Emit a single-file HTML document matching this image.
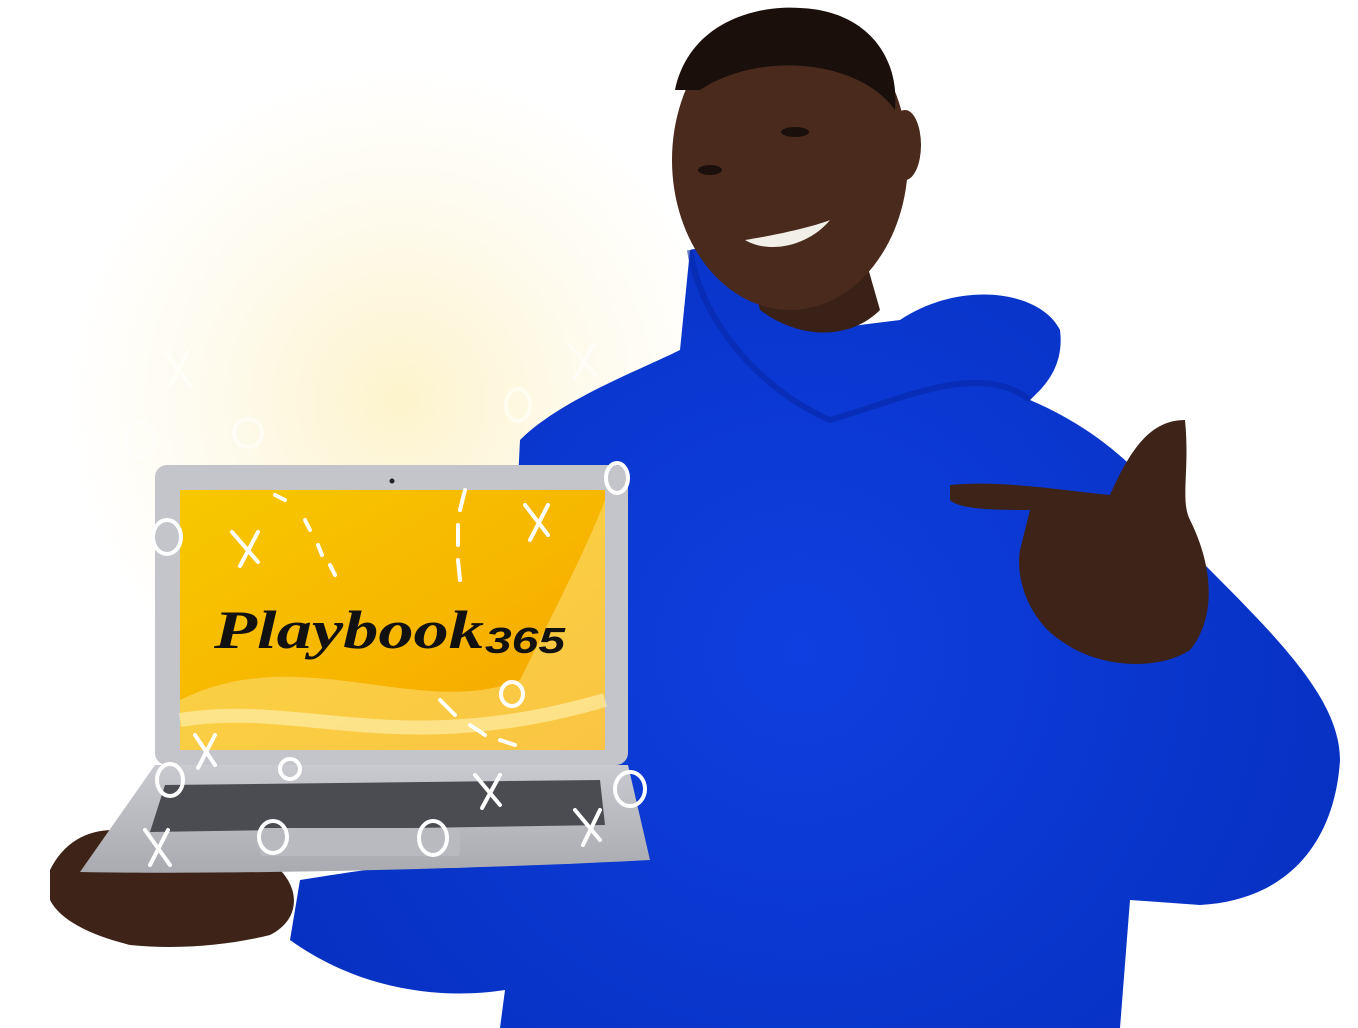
<!DOCTYPE html>
<html><head><meta charset="utf-8"><style>
html,body{margin:0;padding:0;width:1358px;height:1028px;overflow:hidden;background:#fff}
svg{display:block}
</style></head><body>
<svg width="1358" height="1028" viewBox="0 0 1358 1028" xmlns="http://www.w3.org/2000/svg">
<defs>
<radialGradient id="glow" cx="400" cy="400" r="330" gradientUnits="userSpaceOnUse">
<stop offset="0" stop-color="#fdf3cc"/><stop offset="0.5" stop-color="#fefaea"/><stop offset="1" stop-color="#fff"/>
</radialGradient>
<linearGradient id="scr" x1="0" y1="0" x2="1" y2="1">
<stop offset="0" stop-color="#f7c800"/><stop offset="0.6" stop-color="#f7b400"/><stop offset="1" stop-color="#f5a300"/>
</linearGradient>
<radialGradient id="blue" cx="800" cy="650" r="600" gradientUnits="userSpaceOnUse">
<stop offset="0" stop-color="#0f3fe0"/><stop offset="1" stop-color="#0630c0"/>
</radialGradient>
<linearGradient id="base" x1="0" y1="0" x2="0" y2="1">
<stop offset="0" stop-color="#c9cacf"/><stop offset="1" stop-color="#a9abb1"/>
</linearGradient>
</defs>
<rect width="1358" height="1028" fill="url(#glow)"/>
<!-- hoodie -->
<path d="M520 440 C560 400 640 370 680 350 L690 250 C720 240 760 300 820 330 L900 320 C960 280 1040 290 1060 330 C1065 370 1040 390 1030 400 C1100 430 1160 480 1200 560 C1280 640 1340 700 1340 760 C1335 840 1290 900 1200 905 L1130 900 L1120 1028 L500 1028 L505 990 C440 1000 360 990 290 940 L300 880 C360 870 440 860 500 850 Z" fill="url(#blue)"/>
<path d="M690 250 C700 320 760 390 830 420 C900 400 980 360 1030 400" fill="none" stroke="#0626a8" stroke-width="6" opacity="0.6"/>
<!-- neck and head -->
<path d="M740 230 L860 240 L880 310 C850 340 800 340 760 310 Z" fill="#3a2117"/>
<ellipse cx="790" cy="160" rx="118" ry="150" fill="#4a2a1c"/>
<path d="M675 90 C690 20 760 5 800 8 C860 10 900 50 895 110 C860 60 760 50 700 90 Z" fill="#1a0f0b"/>
<ellipse cx="905" cy="145" rx="16" ry="35" fill="#4a2a1c"/>
<path d="M745 240 C770 255 810 245 830 220 C810 228 770 236 745 240 Z" fill="#f2eee8"/>
<ellipse cx="710" cy="170" rx="12" ry="5" fill="#1a0f0b"/>
<ellipse cx="795" cy="132" rx="14" ry="5" fill="#1a0f0b"/>
<!-- pointing hand -->
<path d="M950 485 C1000 480 1060 490 1110 495 C1130 450 1150 420 1185 420 C1190 470 1180 500 1190 520 C1215 570 1215 620 1190 650 C1160 670 1100 670 1060 640 C1030 620 1015 580 1020 550 L1030 510 C1000 510 960 510 950 500 Z" fill="#3e2318"/>
<!-- left hand -->
<path d="M50 870 C70 830 110 820 160 840 L280 870 C300 890 300 920 270 935 C230 945 180 950 130 945 C90 935 60 920 50 900 Z" fill="#3e2318"/>
<!-- laptop -->
<path d="M155 765 L628 765 L650 860 C500 868 250 875 80 872 Z" fill="url(#base)"/>
<path d="M165 785 L600 780 L605 825 L150 832 Z" fill="#4b4c52"/>
<rect x="260" y="828" width="200" height="28" rx="3" fill="#b8babf"/>
<rect x="155" y="465" width="473" height="300" rx="12" fill="#c4c5ca"/>
<rect x="180" y="490" width="425" height="260" fill="url(#scr)"/>
<path d="M180 700 C300 640 420 720 520 680 C560 600 590 540 605 500 L605 750 L180 750 Z" fill="#fde07a" opacity="0.55"/>
<path d="M180 720 C300 700 400 760 605 700" stroke="#fff3b8" stroke-width="14" fill="none" opacity="0.6"/>
<circle cx="392" cy="481" r="2.5" fill="#222"/>
<text x="214" y="648" textLength="270" lengthAdjust="spacingAndGlyphs" font-family="'Liberation Serif',serif" font-weight="bold" font-style="italic" font-size="54" fill="#111">Playbook</text>
<text x="485" y="653" textLength="80" lengthAdjust="spacingAndGlyphs" font-family="'Liberation Sans',sans-serif" font-weight="bold" font-style="italic" font-size="36" fill="#111">365</text>
<!-- chalk marks -->
<g fill="none" stroke="#fff" stroke-width="4" stroke-linecap="round">
<path d="M232 532 L258 562 M258 532 L240 566"/>
<path d="M525 505 L548 535 M548 505 L530 540"/>
<path d="M475 775 L500 805 M500 775 L482 808"/>
<path d="M575 810 L600 840 M600 810 L583 845"/>
<path d="M145 830 L170 865 M168 830 L150 865"/>
<path d="M195 735 L215 765 M215 735 L198 768"/>
<path d="M165 352 L190 385 M188 352 L170 385" opacity="0.5"/>
<path d="M570 345 L595 375 M593 345 L575 378" opacity="0.5"/>
<ellipse cx="167" cy="537" rx="14" ry="17"/>
<ellipse cx="617" cy="478" rx="11" ry="15"/>
<ellipse cx="512" cy="694" rx="11" ry="12"/>
<ellipse cx="290" cy="769" rx="10" ry="10"/>
<ellipse cx="170" cy="780" rx="13" ry="16"/>
<ellipse cx="630" cy="789" rx="15" ry="17"/>
<ellipse cx="273" cy="837" rx="14" ry="16"/>
<ellipse cx="433" cy="838" rx="14" ry="17"/>
<ellipse cx="140" cy="440" rx="14" ry="18" opacity="0.5"/>
<ellipse cx="248" cy="433" rx="14" ry="14" opacity="0.5"/>
<ellipse cx="518" cy="405" rx="12" ry="16" opacity="0.5"/>
<path d="M275 495 L285 500 M305 520 L310 530 M318 545 L322 555 M330 565 L335 575" />
<path d="M465 490 L460 510 M458 525 L458 545 M458 560 L460 580"/>
<path d="M440 700 L455 715 M470 725 L485 735 M500 740 L515 745"/>
</g>
</svg>
</body></html>
